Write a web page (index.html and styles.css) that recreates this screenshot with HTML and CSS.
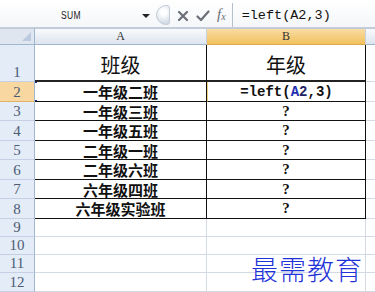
FILE: index.html
```html
<!DOCTYPE html>
<html>
<head>
<meta charset="utf-8">
<link rel="stylesheet" href="styles.css">
</head>
<body>
<div class="fbar">
  <div class="namebox">SUM</div>
  <div class="drop"></div>
  <div class="knob"></div>
  <div class="icons">
    <svg class="ic" width="12" height="12" viewBox="0 0 12 12"><path d="M2 2 L10 10 M10 2 L2 10" stroke="#6b6f77" stroke-width="2.2" stroke-linecap="round"/></svg>
    <svg class="ic" width="14" height="12" viewBox="0 0 14 12"><path d="M1.5 6.5 L5 10 L12.5 1.5" stroke="#6b6f77" stroke-width="2.2" fill="none" stroke-linecap="round" stroke-linejoin="round"/></svg>
    <span class="fx">f<sub>x</sub></span>
  </div>
  <div class="formula">=left(A2,3)</div>
</div>
<div class="sheet">
  <div class="corner"><div class="tri"></div></div>
  <div class="ch">A</div>
  <div class="ch sel">B</div>
  <div class="ch rest"></div>

  <div class="rh r1">1</div>
  <div class="c t head">班级</div>
  <div class="c t tb head">年级</div>
  <div class="c e"></div>

  <div class="rh sel">2</div>
  <div class="c t top a2">一年级二班</div>
  <div class="c t tb top b2">=left(<span class="ref">A</span><span class="ref2">2</span>,3)</div>
  <div class="c e"></div>

  <div class="rh">3</div>
  <div class="c t">一年级三班</div>
  <div class="c t tb q">?</div>
  <div class="c e"></div>

  <div class="rh">4</div>
  <div class="c t">一年级五班</div>
  <div class="c t tb q">?</div>
  <div class="c e"></div>

  <div class="rh">5</div>
  <div class="c t">二年级一班</div>
  <div class="c t tb q">?</div>
  <div class="c e"></div>

  <div class="rh">6</div>
  <div class="c t">二年级六班</div>
  <div class="c t tb q">?</div>
  <div class="c e"></div>

  <div class="rh">7</div>
  <div class="c t">六年级四班</div>
  <div class="c t tb q">?</div>
  <div class="c e"></div>

  <div class="rh">8</div>
  <div class="c t">六年级实验班</div>
  <div class="c t tb q">?</div>
  <div class="c e"></div>

  <div class="rh">9</div><div class="c"></div><div class="c"></div><div class="c e"></div>
  <div class="rh">10</div><div class="c"></div><div class="c"></div><div class="c e"></div>
  <div class="rh">11</div><div class="c"></div><div class="c"></div><div class="c e"></div>
  <div class="rh">12</div><div class="c"></div><div class="c"></div><div class="c e"></div>

  <div class="mark">最需教育</div>
</div>
</body>
</html>
```

FILE: styles.css
```css
* { box-sizing: border-box; }
html, body { margin: 0; padding: 0; background: #fff; }
body { width: 375px; height: 292px; overflow: hidden; font-family: "Liberation Sans", sans-serif; }

.fbar {
  height: 28px;
  display: flex;
  align-items: center;
  background: linear-gradient(#ffffff, #f4f6f9);
  border-bottom: 1px solid #c5cdd8;
  position: relative;
}
.namebox {
  width: 142px;
  text-align: center;
  font-size: 10px;
  letter-spacing: 0.5px;
  color: #222;
  padding-top: 3px;
  transform: scaleX(0.85);
}
.drop {
  width: 0; height: 0;
  border-left: 4px solid transparent;
  border-right: 4px solid transparent;
  border-top: 4px solid #222;
  margin-top: 4px;
}
.knob {
  width: 14px; height: 20px;
  margin-left: 6px;
  margin-top: 2px;
  border-radius: 10px 3px 3px 10px;
  background: radial-gradient(circle at 55% 35%, #ffffff 20%, #d3dbe5 80%);
  border: 1px solid #c3ccd7;
}
.icons {
  display: flex;
  align-items: center;
  gap: 7px;
  padding-left: 7px;
  padding-right: 6px;
  height: 24px;
  margin-top: 2px;
  border-right: 1px solid #b7c1cc;
}
.ic { display: block; margin-top: 2px; }
.fx {
  font-family: "Liberation Serif", serif;
  font-style: italic;
  font-size: 15px;
  color: #6b6f77;
  margin-top: -1px;
}
.fx sub { font-size: 10px; vertical-align: baseline; position: relative; top: 1px; }
.formula {
  padding-left: 9px;
  padding-top: 3px;
  font-family: "Liberation Mono", monospace;
  font-size: 13.5px;
  color: #111;
}

.sheet {
  display: grid;
  grid-template-columns: 35px 172px 159px 9px;
  grid-template-rows: 17px 37px 20px 19px 20px 19px 20px 19px 20px 18px 18px 18px 19px;
  position: relative;
}
.corner {
  background: #dfe6f0;
  border-right: 1px solid #9eb6ce;
  border-bottom: 1px solid #9eb6ce;
  border-top: 1px solid #c0cad8;
  position: relative;
}
.tri {
  position: absolute; right: 3px; bottom: 3px;
  width: 0; height: 0;
  border-left: 9px solid transparent;
  border-bottom: 9px solid #bccadf;
}
.ch {
  background: linear-gradient(#f8fafc, #dde4ee);
  border-right: 1px solid #c7d0dc;
  border-bottom: 1px solid #9eb6ce;
  border-top: 1px solid #c0cad8;
  text-align: center;
  font-family: "Liberation Serif", serif;
  font-size: 12px;
  line-height: 15px;
  color: #333;
}
.ch.sel { background: linear-gradient(#f9dca3, #f1c15d); border-bottom-color: #d9a94a; }
.ch.rest { border-right: none; }

.rh {
  background: #e4ecf7;
  border-right: 1px solid #9eb6ce;
  border-bottom: 1px solid #c5d1e2;
  text-align: center;
  font-family: "Liberation Serif", serif;
  font-size: 15px;
  color: #4c5b74;
  display: flex; align-items: flex-end; justify-content: center;
  line-height: 18px;
}
.rh.sel { background: #f8d8a0; border-bottom-color: #e0b467; }

.c {
  border-right: 1px solid #d4dae3;
  border-bottom: 1px solid #d4dae3;
}
.c.e { border-right: none; }
.c.t {
  border-right: 1px solid #111;
  border-bottom: 1px solid #111;
  display: flex; align-items: center; justify-content: center;
  font-family: "Noto Sans CJK SC", sans-serif;
  font-weight: 700;
  font-size: 15px;
  color: #111;
  line-height: 1;
  overflow: hidden;
}
.c.t.head { font-weight: 400; font-size: 20px; border-bottom: 2px solid #222; padding-top: 4px; }
.c.tb { border-right: 1.5px solid #111; }
.c.t.q { font-family: "Liberation Serif", serif; font-size: 15px; }
.c.t.b2 {
  font-family: "Liberation Mono", monospace;
  font-size: 14px;
  border-left: 1px solid #f0d27a;
  padding-top: 1px;
}
.ref { color: #1e2fb0; }
.ref2 { color: #1c2360; }
.a2 { position: relative; overflow: visible; }
.a2::before, .a2::after {
  content: "";
  position: absolute; left: -1px;
  width: 3px; height: 3px;
  background: #1b2a8c;
}
.a2::before { top: -2px; }
.a2::after { bottom: -2px; }

.mark {
  position: absolute;
  left: 251px;
  top: 227px;
  font-family: "Noto Sans CJK SC", sans-serif;
  font-weight: 300;
  font-size: 27px;
  letter-spacing: 1px;
  color: #1f33d8;
  line-height: 1;
}
```
